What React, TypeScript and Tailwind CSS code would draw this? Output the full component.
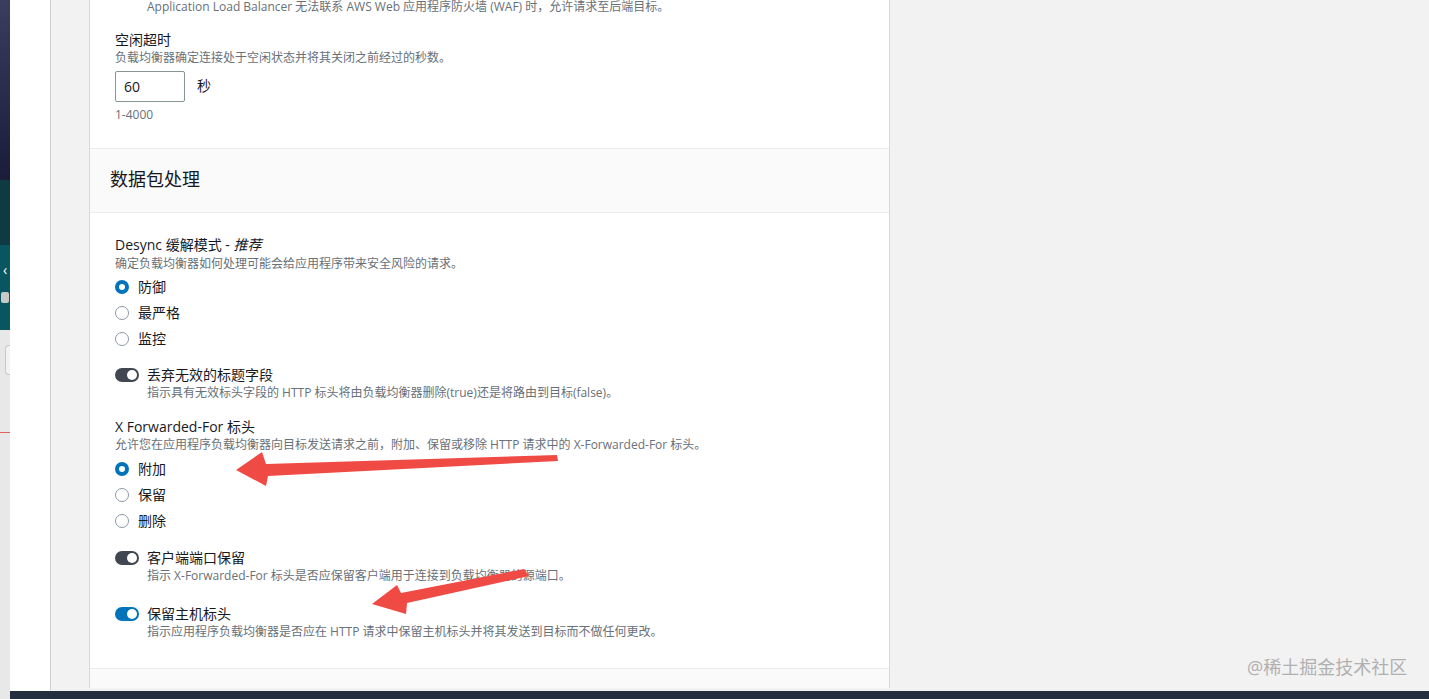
import React from "react";

const FONT = '"Open Sans", "Noto Sans CJK SC", sans-serif';

function Radio({ checked, label }: { checked?: boolean; label: string }) {
  return (
    <div className="flex h-[26px] items-center">
      {checked ? (
        <span className="box-border h-[14px] w-[14px] rounded-full border-[4px] border-[#0073bb] bg-white" />
      ) : (
        <span className="box-border h-[14px] w-[14px] rounded-full border-[1.5px] border-[#8d99a8] bg-white" />
      )}
      <span className="ml-[9px] text-[14px] leading-[20px] text-[#16191f]">{label}</span>
    </div>
  );
}

function Toggle({ on, label, desc }: { on?: boolean; label: string; desc: string }) {
  return (
    <div>
      <div className="flex h-[20px] items-center">
        <span
          className={
            on
              ? "box-border flex h-[14px] w-[24px] items-center justify-end rounded-full bg-[#0073bb] p-[2px]"
              : "box-border flex h-[14px] w-[24px] items-center justify-end rounded-full bg-[#414750] p-[2px]"
          }
        >
          <span className="h-[10px] w-[10px] rounded-full bg-white" />
        </span>
        <span className="ml-[8px] text-[14px] leading-[20px] text-[#16191f]">{label}</span>
      </div>
      <div className="ml-[32px] text-[12px] leading-[16px] text-[#687078]">{desc}</div>
    </div>
  );
}

export default function App() {
  return (
    <div
      className="relative flex h-[699px] w-[1429px] overflow-hidden bg-[#f2f2f2]"
      style={{ fontFamily: FONT }}
    >
      {/* left strip: part of another window */}
      <div className="flex w-[10px] shrink-0 flex-col">
        <div className="h-[180px] bg-gradient-to-b from-[#3b3d5e] to-[#1a1c3a]" />
        <div className="h-[65px] bg-[#0f3a42]" />
        <div className="flex h-[85px] flex-col items-center bg-[#0a5660]">
          <span className="mt-[17px] text-[14px] leading-[16px] text-white">‹</span>
          <span className="mt-[14px] h-[11px] w-[8px] rounded-[2px] bg-[#c9c9c9]" />
        </div>
        <div className="flex flex-1 flex-col bg-[#e8e8e8]">
          <div className="ml-[5px] mt-[15px] h-[30px] rounded-l-[4px] border border-r-0 border-[#c8c8c8] bg-[#f3f3f3]" />
          <div className="mt-[57px] h-[1px] bg-[#e06060]" />
        </div>
      </div>

      <div className="flex flex-1 flex-col">
        <div className="flex h-[691px]">
          <div className="w-[40px] bg-white" />
          <div className="h-[690px] w-[1px] bg-[#cfcfcf]" />
          <div className="w-[38px] bg-[#f2f2f2]" />
          {/* card */}
          <div className="flex h-[688px] w-[801px] flex-col border-x border-[#d5dbdb] bg-white">
            <div className="flex h-[148px] flex-col pl-[25px]">
              <div className="ml-[32px] mt-[-1px] text-[12px] leading-[16px] text-[#687078]">
                Application Load Balancer 无法联系 AWS Web 应用程序防火墙 (WAF) 时，允许请求至后端目标。
              </div>
              <div className="mt-[15px] text-[14px] leading-[20px] text-[#16191f]">空闲超时</div>
              <div className="text-[12px] leading-[16px] text-[#687078]">
                负载均衡器确定连接处于空闲状态并将其关闭之前经过的秒数。
              </div>
              <div className="mt-[5px] flex items-center">
                <div className="box-border flex h-[31px] w-[70px] items-center rounded-[2px] border border-[#879596] pl-[8px] text-[14px] text-[#16191f]">
                  60
                </div>
                <span className="ml-[12px] mt-[-3px] text-[14px] text-[#16191f]">秒</span>
              </div>
              <div className="mt-[5px] text-[12px] leading-[16px] text-[#687078]">1-4000</div>
            </div>
            <div className="flex h-[65px] items-center border-y border-[#eaeded] bg-[#fafafa] pl-[20px]">
              <span className="mt-[-3px] text-[18px] leading-[24px] text-[#16191f]">数据包处理</span>
            </div>
            <div className="flex flex-1 flex-col pl-[25px] pt-[22px]">
              <div className="text-[14px] leading-[20px] text-[#16191f]">
                Desync 缓解模式 - <i>推荐</i>
              </div>
              <div className="mt-[1px] text-[12px] leading-[16px] text-[#687078]">
                确定负载均衡器如何处理可能会给应用程序带来安全风险的请求。
              </div>
              <div className="mt-[2px]">
                <Radio checked label="防御" />
                <Radio label="最严格" />
                <Radio label="监控" />
              </div>
              <div className="mt-[13px]">
                <Toggle
                  label="丢弃无效的标题字段"
                  desc="指示具有无效标头字段的 HTTP 标头将由负载均衡器删除(true)还是将路由到目标(false)。"
                />
              </div>
              <div className="mt-[16px] text-[14px] leading-[20px] text-[#16191f]">X Forwarded-For 标头</div>
              <div className="text-[12px] leading-[16px] text-[#687078]">
                允许您在应用程序负载均衡器向目标发送请求之前，附加、保留或移除 HTTP 请求中的 X-Forwarded-For 标头。
              </div>
              <div className="mt-[3px]">
                <Radio checked label="附加" />
                <Radio label="保留" />
                <Radio label="删除" />
              </div>
              <div className="mt-[14px]">
                <Toggle
                  label="客户端端口保留"
                  desc="指示 X-Forwarded-For 标头是否应保留客户端用于连接到负载均衡器的源端口。"
                />
              </div>
              <div className="mt-[20px]">
                <Toggle
                  on
                  label="保留主机标头"
                  desc="指示应用程序负载均衡器是否应在 HTTP 请求中保留主机标头并将其发送到目标而不做任何更改。"
                />
              </div>
            </div>
            <div className="h-[20px] border-t border-[#eaeded] bg-[#fafafa]" />
          </div>
          <div className="flex-1 bg-[#f2f2f2]" />
        </div>
        <div className="h-[8px] bg-[#232f3e]" />
      </div>

      {/* annotation arrows */}
      <svg className="pointer-events-none absolute left-0 top-0" width="1429" height="699">
        <polygon
          points="557,455 558,461 268,476 266,486 236,470 262,452 266,464"
          fill="#f04a45"
        />
        <polygon
          points="524,569 529,576 407,603 406,614 372,604 397,585 401,593"
          fill="#f04a45"
        />
      </svg>

      {/* watermark */}
      <div className="pointer-events-none absolute left-[1247px] top-[654px] text-[18px] leading-[26px] text-[#b0b0b0]">
        @稀土掘金技术社区
      </div>
    </div>
  );
}
